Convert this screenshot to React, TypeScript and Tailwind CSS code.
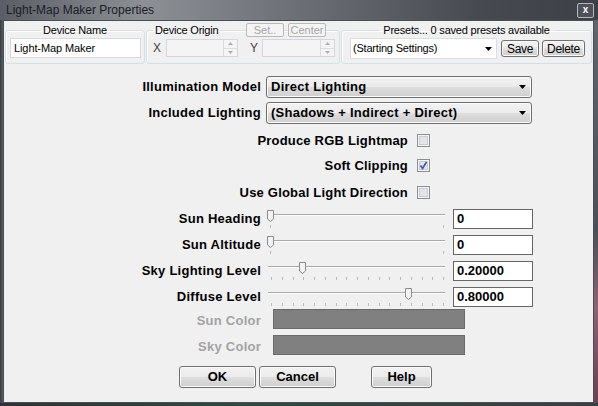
import React from "react";

const winBtn =
  "flex items-center justify-center rounded-[3px] border border-[#707070] bg-[linear-gradient(#f2f2f2,#ebebeb_48%,#dddddd_52%,#cfcfcf)] shadow-[inset_0_0_0_1px_#fbfbfb] text-black";

const Arrow = () => (
  <svg width="7" height="4" className="shrink-0">
    <path d="M0 0h7l-3.5 4z" fill="#000" />
  </svg>
);

const Spinner = () => (
  <div className="ml-auto flex h-full w-[14px] flex-col border-l border-[#dcdcdc]">
    <div className="flex flex-1 items-center justify-center border-b border-[#dcdcdc] bg-[#f4f4f4]">
      <svg width="5" height="3"><path d="M0 3h5l-2.5-3z" fill="#b0b0b0" /></svg>
    </div>
    <div className="flex flex-1 items-center justify-center bg-[#f4f4f4]">
      <svg width="5" height="3"><path d="M0 0h5l-2.5 3z" fill="#b0b0b0" /></svg>
    </div>
  </div>
);

const Check = ({ checked }: { checked?: boolean }) => (
  <svg width="13" height="13" className="ml-[9px] shrink-0">
    <rect x="0.5" y="0.5" width="12" height="12" fill="#f4f4f4" stroke="#8e8f8f" />
    <rect x="2.5" y="2.5" width="8" height="8" fill="#e2e4e7" stroke="#c9ccd1" />
    {checked && <path d="M3.5 6.5l2 3 4-6.5" fill="none" stroke="#3c58a6" strokeWidth="1.6" />}
  </svg>
);

const Slider = ({ pos, ticks }: { pos: number; ticks?: boolean }) => {
  const marks = ticks ? Array.from({ length: 17 }, (_, i) => Math.round(5 + i * 10.75)) : [4, 177];
  return (
    <svg width="180" height="20" className="ml-[5px] shrink-0">
      <line x1="2" y1="5.5" x2="179" y2="5.5" stroke="#a9a9a9" />
      <line x1="2" y1="6.5" x2="179" y2="6.5" stroke="#ffffff" />
      {marks.map((x) => (
        <line key={x} x1={x + 0.5} y1="16" x2={x + 0.5} y2="19" stroke="#b8b8b8" />
      ))}
      <path d={`M${pos + 0.5} 1.5h6v8.5l-3 2.5l-3-2.5z`} fill="#f3f3f3" stroke="#8c8c8c" />
    </svg>
  );
};

const ValueBox = ({ value }: { value: string }) => (
  <div className="ml-[7px] flex h-[20px] w-[80px] items-center border border-[#666] bg-white pl-[3px] text-[13px] font-bold">
    {value}
  </div>
);

const Label = ({ children, gray }: { children: React.ReactNode; gray?: boolean }) => (
  <div className={`w-[257px] shrink-0 text-right text-[13px] font-bold tracking-[0.25px] ${gray ? "pt-[3px] text-[#a3a3a3]" : "text-black"}`}>
    {children}
  </div>
);

const sliders = [
  { label: "Sun Heading", pos: 1, ticks: false, value: "0" },
  { label: "Sun Altitude", pos: 1, ticks: false, value: "0" },
  { label: "Sky Lighting Level", pos: 33, ticks: true, value: "0.20000" },
  { label: "Diffuse Level", pos: 139, ticks: true, value: "0.80000" },
];

const checks = [
  { label: "Produce RGB Lightmap", checked: false, mt: "mt-[10px]" },
  { label: "Soft Clipping", checked: true, mt: "mt-[12px]" },
  { label: "Use Global Light Direction", checked: false, mt: "mt-[14px]" },
];

export default function App() {
  return (
    <div className="flex h-[406px] w-[598px] flex-col bg-[#3e4248] font-['Liberation_Sans',Arial,sans-serif] text-black">
      {/* title bar */}
      <div className="flex h-[20px] shrink-0 items-center justify-between bg-[linear-gradient(90deg,#5b5f65_0%,#8c9095_24%,#6c7076_50%,#474b51_80%,#3c4046_100%)] pl-[6px] pr-[4px]">
        <span className="text-[12px] text-[#1c1c26]">Light-Map Maker Properties</span>
        <div className="flex h-[15px] w-[17px] items-center justify-center rounded-[2px] border border-[#b4b8bc] bg-[#4e5258] text-[10px] font-bold leading-none text-white">
          x
        </div>
      </div>

      <div className="flex flex-1">
        <div className="w-[3px] shrink-0 bg-[linear-gradient(90deg,#383c42,#5a5e64)]" />

        {/* panel */}
        <div className="flex w-[591px] shrink-0 flex-col border border-[#4a4e54] bg-[#f0f0f0]">
          {/* top group boxes */}
          <div className="flex pl-[1px] pt-[2px]">
            <fieldset className="h-[41px] w-[140px] shrink-0 rounded-[3px] border border-[#d5dfe5] shadow-[inset_1px_1px_0_#fff]">
              <legend className="mx-auto px-[3px] text-[11px] leading-[14px] tracking-[-0.2px]">Device Name</legend>
              <div className="ml-[4px] mt-[1px] flex h-[20px] w-[131px] items-center border border-[#d6dbe0] bg-white pl-[3px] text-[11px] tracking-[-0.1px]">
                Light-Map Maker
              </div>
            </fieldset>

            <fieldset className="relative ml-[1px] h-[41px] w-[194px] shrink-0 rounded-[3px] border border-[#d5dfe5] shadow-[inset_1px_1px_0_#fff]">
              <legend className="ml-[6px] px-[2px] text-[11px] leading-[14px] tracking-[-0.2px]">Device Origin</legend>
              <div className="absolute left-[99px] top-[-14px] flex gap-[4px]">
                <div className="flex h-[14px] w-[38px] items-center justify-center rounded-[2px] border border-[#b9b9b9] bg-[#f4f4f4] text-[11px] text-[#a6a6a6]">
                  Set..
                </div>
                <div className="flex h-[14px] w-[38px] items-center justify-center rounded-[2px] border border-[#b9b9b9] bg-[#f4f4f4] text-[11px] text-[#a6a6a6]">
                  Center
                </div>
              </div>
              <div className="mt-[2px] flex items-center">
                <span className="ml-[6px] w-[13px] text-[12px] text-[#444]">X</span>
                <div className="flex h-[18px] w-[72px] border border-[#d3d7dc] bg-[#f4f4f4]">
                  <Spinner />
                </div>
                <span className="ml-[12px] w-[12px] text-[12px] text-[#444]">Y</span>
                <div className="flex h-[18px] w-[73px] border border-[#d3d7dc] bg-[#f4f4f4]">
                  <Spinner />
                </div>
              </div>
            </fieldset>

            <fieldset className="ml-[1px] h-[41px] w-[251px] shrink-0 rounded-[3px] border border-[#d5dfe5] shadow-[inset_1px_1px_0_#fff]">
              <legend className="mx-auto px-[3px] text-[11px] leading-[14px] tracking-[-0.2px]">
                Presets... 0 saved presets available
              </legend>
              <div className="mt-[1px] flex items-center">
                <div className="ml-[8px] flex h-[21px] w-[147px] items-center justify-between border border-[#dadee3] bg-white pl-[2px] pr-[4px] text-[11px] tracking-[-0.2px]">
                  <span>(Starting Settings)</span>
                  <Arrow />
                </div>
                <div className={`${winBtn} ml-[4px] h-[17px] w-[38px] text-[12px] tracking-[-0.3px]`}>Save</div>
                <div className={`${winBtn} ml-[3px] h-[17px] w-[43px] text-[12px] tracking-[-0.3px]`}>Delete</div>
              </div>
            </fieldset>
          </div>

          {/* dropdown rows */}
          <div className="mt-[12px] flex items-center">
            <Label>Illumination Model</Label>
            <div className={`${winBtn} ml-[5px] h-[22px] w-[266px] !justify-between pl-[4px] pr-[5px] text-[13px] font-bold tracking-[0.25px]`}>
              <span>Direct Lighting</span>
              <Arrow />
            </div>
          </div>
          <div className="mt-[4px] flex items-center">
            <Label>Included Lighting</Label>
            <div className={`${winBtn} ml-[5px] h-[22px] w-[266px] !justify-between pl-[4px] pr-[5px] text-[13px] font-bold tracking-[0.25px]`}>
              <span>(Shadows + Indirect + Direct)</span>
              <Arrow />
            </div>
          </div>

          {/* check rows */}
          {checks.map((c) => (
            <div key={c.label} className={`${c.mt} flex h-[13px] items-center`}>
              <div className="w-[404px] shrink-0 text-right text-[13px] font-bold tracking-[0.2px]">{c.label}</div>
              <Check checked={c.checked} />
            </div>
          ))}

          {/* slider rows */}
          {sliders.map((s, i) => (
            <div key={s.label} className={`${i === 0 ? "mt-[10px]" : "mt-[6px]"} flex h-[20px] items-center`}>
              <Label>{s.label}</Label>
              <Slider pos={s.pos} ticks={s.ticks} />
              <ValueBox value={s.value} />
            </div>
          ))}

          {/* colour swatches */}
          <div className="mt-[2px] flex h-[20px] items-center">
            <Label gray>Sun Color</Label>
            <div className="ml-[12px] h-[20px] w-[192px] border border-[#6b6b6b] bg-[#808080]" />
          </div>
          <div className="mt-[6px] flex h-[20px] items-center">
            <Label gray>Sky Color</Label>
            <div className="ml-[12px] h-[20px] w-[192px] border border-[#6b6b6b] bg-[#808080]" />
          </div>

          {/* buttons */}
          <div className="mt-[11px] flex pl-[175px]">
            <div className={`${winBtn} h-[22px] w-[77px] text-[13px] font-bold`}>OK</div>
            <div className={`${winBtn} ml-[3px] h-[22px] w-[77px] text-[13px] font-bold`}>Cancel</div>
            <div className={`${winBtn} ml-[35px] h-[22px] w-[61px] text-[13px] font-bold`}>Help</div>
          </div>
        </div>

        <div className="w-[4px] shrink-0 bg-[linear-gradient(#62666c_0%,#4c5056_55%,#8e6272_75%,#6e3e50_100%)]" />
      </div>
      <div className="h-[3px] shrink-0 bg-[linear-gradient(90deg,#2e3236,#2f4a40_40%,#3a3e44)]" />
    </div>
  );
}
